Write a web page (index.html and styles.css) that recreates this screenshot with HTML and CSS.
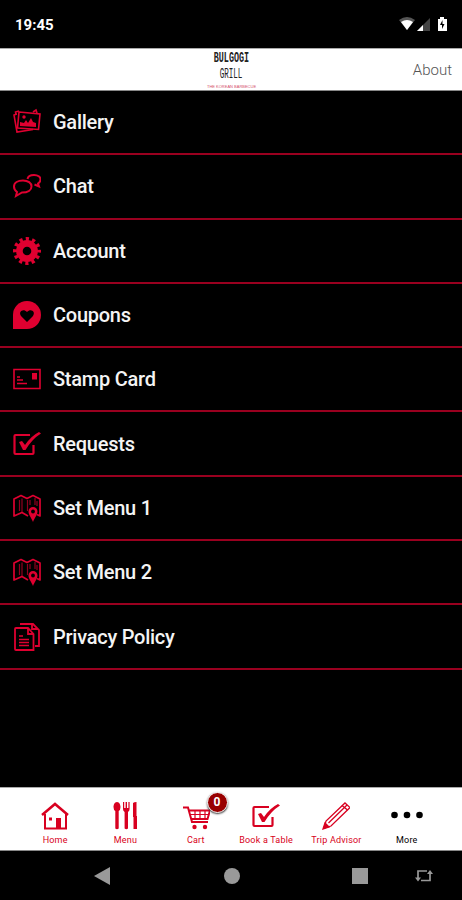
FILE: index.html
```html
<!DOCTYPE html>
<html lang="en">
<head>
    <meta charset="UTF-8">
    <meta name="viewport" content="width=device-width, initial-scale=1.0">
    <title>Bulgogi Grill</title>
    <link rel="stylesheet" href="styles.css">
</head>
<body>
    <svg class="sprite">
        <symbol id="check" viewBox="0 0 28 28">
            <path d="M17 5H2.500Q1.500 5 1.500 6V23Q1.500 24 2.500 24H19.500Q20.500 24 20.500 23V15" fill="none" stroke="currentColor" stroke-width="2.200"/>
            <path d="M6 12L9 11L12 15Q18 6 26 2L28 3.500Q19 9 12.500 20H10Z" fill="currentColor"/>
        </symbol>
        <symbol id="map" viewBox="0 0 28 28">
            <path d="M15 22L9 18.500L1 22V5L8 1.500L14 4.500L20 1.500L27 5V22L24 20.500" fill="none" stroke="currentColor" stroke-width="1.700" stroke-linejoin="round"/>
            <path d="M6.500 6V17M9 4.500V18M14.500 6V17M17 6V11M22 4V11M24 7V12" fill="none" stroke="currentColor" stroke-width="1.200" opacity=".65"/>
            <path d="M20 28C18.500 24 15.500 21 15.500 17.500A4.500 4.500 0 0 1 24.500 17.500C24.500 21 21.500 24 20 28Z" fill="currentColor"/>
            <circle cx="20" cy="17.500" r="1.900" fill="#000"/>
        </symbol>
    </svg>

    <div class="status">
        <span class="time">19:45</span>
        <svg class="signals" width="50" height="18" viewBox="0 0 50 18">
            <path d="M0 4Q8 -2 16 4L8 14Z" fill="#555"/>
            <path d="M2 6Q8 2 14 6L8 14Z" fill="#fff"/>
            <path d="M18 15L31 2V15Z" fill="#444"/>
            <path d="M18 15L24 9V15Z" fill="#fff"/>
            <path d="M39 3H41V1H45V3H48V15H39Z" fill="#fff"/>
            <path d="M43.500 4L41 9H43V13L45.500 8H43.500Z" fill="#000"/>
        </svg>
    </div>

    <div class="header">
        <div class="logo">
            <span class="logo-name">BULGOGI</span>
            <span class="logo-grill">GRILL</span>
            <span class="logo-tagline">THE KOREAN BARBECUE</span>
        </div>
        <span class="about">About</span>
    </div>

    <div class="list">
        <div class="row">
            <svg class="icon" viewBox="0 0 28 28" fill="none" stroke="currentColor" stroke-width="1.600">
                <path d="M4 6L1 7L4 24L20 21.500M6 3L2.500 4L3 7M20 4L23 2L24 5"/>
                <path d="M6 4L27 6L25.500 21.500L4.500 20Z"/>
                <path d="M7 18V14L11 15L13 12L15 15L18 10L20 14L23 15V19Z" fill="currentColor" stroke="none"/>
                <circle cx="11" cy="9" r="1.700" fill="currentColor" stroke="none"/>
            </svg>
            <span>Gallery</span>
        </div>
        <div class="row">
            <svg class="icon" viewBox="0 0 28 28" fill="none" stroke="currentColor" stroke-width="2">
                <path d="M4 20Q1 18 1 14.500C1 10.500 5 8.500 10 8.500S18.500 11 18.500 14.500S15 20.500 9 20.500L3 24Z"/>
                <path d="M14.500 7C15 4 18 3 21 3C25 3 27.500 5 27.500 7.500Q27.500 10 25 11.500L26 14.500L21.500 12.500"/>
            </svg>
            <span>Chat</span>
        </div>
        <div class="row">
            <svg class="icon" viewBox="0 0 28 28" fill="none" stroke="currentColor">
                <circle cx="14" cy="14" r="7.600" stroke-width="6.600"/>
                <circle cx="14" cy="14" r="12" stroke-width="4" stroke-dasharray="3.200 3.083" stroke-dashoffset="1.600"/>
            </svg>
            <span>Account</span>
        </div>
        <div class="row">
            <svg class="icon" viewBox="0 0 28 28">
                <path d="M0 28V14A14 14 0 1 1 14 28Z" fill="currentColor"/>
                <path d="M14 21L8 15C5 11 10 7 14 11C18 7 23 11 20 15Z" fill="#000"/>
            </svg>
            <span>Coupons</span>
        </div>
        <div class="row">
            <svg class="icon" viewBox="0 0 28 28">
                <path d="M1 4.500H27V23.500H1Z" fill="none" stroke="currentColor" stroke-width="1.600"/>
                <path d="M4 12H7M4 15H10M4 18.500H14" stroke="currentColor" stroke-width="1.300"/>
                <path d="M19 8H24V14.500H19Z" fill="currentColor"/>
            </svg>
            <span>Stamp Card</span>
        </div>
        <div class="row">
            <svg class="icon"><use href="#check"/></svg>
            <span>Requests</span>
        </div>
        <div class="row">
            <svg class="icon"><use href="#map"/></svg>
            <span>Set Menu 1</span>
        </div>
        <div class="row">
            <svg class="icon"><use href="#map"/></svg>
            <span>Set Menu 2</span>
        </div>
        <div class="row">
            <svg class="icon" viewBox="0 0 28 28" fill="none" stroke="currentColor" stroke-width="1.800">
                <path d="M7 1H20L26 7V23H22M19 1V6H25"/>
                <path d="M3 5H15L20.500 11V27H3Q2 27 2 26V6Q2 5 3 5ZM15 5V11H20"/>
                <path d="M6 13H10M6 16.500H16M6 19.500H16M6 22.500H16" stroke-width="1.300"/>
            </svg>
            <span>Privacy Policy</span>
        </div>
    </div>

    <div class="tabs">
        <div class="tab">
            <svg class="tab-icon" viewBox="0 0 28 28" fill="none" stroke="currentColor" stroke-width="2">
                <path d="M1 13L14 2L27 13" stroke-width="2.500"/>
                <path d="M4 12V26.500H25V12"/>
                <path d="M15 27V16H20V27Z" fill="currentColor" stroke="none"/>
                <path d="M8 15.500H11V18.500H8Z" fill="currentColor" stroke="none"/>
            </svg>
            <span>Home</span>
        </div>
        <div class="tab">
            <svg class="tab-icon" viewBox="0 0 28 28" fill="currentColor">
                <path d="M6 0C8.500 0 9.500 3 9.500 5Q9.500 8 7.700 9V26.500Q6 28 4.300 26.500V9Q2.500 8 2.500 5C2.500 3 3.500 0 6 0Z"/>
                <path d="M12 0H13.200V6H14.600V0H16V6H17.400V0H18.600V7Q18.600 9 17 10V26.500Q15.300 28 13.600 26.500V10Q12 9 12 7Z"/>
                <path d="M22 1Q23 0 25.500 0V14H26V27H22.500V15H22Z"/>
            </svg>
            <span>Menu</span>
        </div>
        <div class="tab">
            <svg class="tab-icon" viewBox="0 0 28 28" fill="none" stroke="currentColor" stroke-width="2">
                <path d="M1 5.500H6L10 20H26M7 8.500H28L25.500 17H9"/>
                <path d="M8 12.500H27M13 9V17M18 9V17M23 9V17" stroke-width="1.200"/>
                <circle cx="12.500" cy="25" r="2.200" fill="currentColor" stroke="none"/>
                <circle cx="23" cy="25" r="2.200" fill="currentColor" stroke="none"/>
            </svg>
            <span>Cart</span>
            <span class="badge">0</span>
        </div>
        <div class="tab">
            <svg class="tab-icon"><use href="#check"/></svg>
            <span>Book a Table</span>
        </div>
        <div class="tab">
            <svg class="tab-icon" viewBox="0 0 28 28" fill="none" stroke="currentColor" stroke-width="1.300">
                <path d="M2 26L4 19L23 1L28 5.500L9 24Z"/>
                <path d="M6.500 21L25 3M20 3.500L25.500 8"/>
                <path d="M1 27L3 21L7 25Z" fill="currentColor"/>
            </svg>
            <span>Trip Advisor</span>
        </div>
        <div class="tab more">
            <svg class="tab-icon dots" viewBox="0 0 32 28" fill="currentColor">
                <circle cx="3.500" cy="13" r="3.300"/>
                <circle cx="16" cy="13" r="3.300"/>
                <circle cx="28.500" cy="13" r="3.300"/>
            </svg>
            <span>More</span>
        </div>
    </div>

    <div class="navbar">
        <svg width="16" height="18" viewBox="0 0 16 18"><path d="M0 9L16 0V18Z" fill="#999"/></svg>
        <span class="circle"></span>
        <span class="square"></span>
        <svg width="18" height="14" viewBox="0 0 18 14">
            <path d="M6 11.500H15V4M12 2H3V10" fill="none" stroke="#999" stroke-width="1.700"/>
            <path d="M12 5L15 1L18 5ZM0 8.500L3 12.500L6 8.500Z" fill="#999"/>
        </svg>
    </div>
</body>
</html>
```
FILE: styles.css
```css
* {
    box-sizing: border-box;
}
body {
    margin: 0;
    height: 900px;
    display: flex;
    flex-direction: column;
    background-color: #000;
    font-family: Roboto, sans-serif;
    overflow: hidden;
}
.sprite {
    display: none;
}
.status {
    height: 48px;
    padding: 2px 13px 0 15px;
    display: flex;
    align-items: center;
    justify-content: space-between;
    color: #fff;
}
.time {
    font-size: 15px;
    font-weight: bold;
}
.header {
    height: 43px;
    padding-right: 10px;
    display: grid;
    grid-template-columns: 1fr 80px 1fr;
    align-items: center;
    background-color: #fff;
    border-top: 1px solid #aaa;
    border-bottom: 1px solid #888;
}
.logo {
    grid-column: 2;
    height: 41px;
    padding-top: 1px;
    margin-left: 11px;
    display: flex;
    flex-direction: column;
    align-items: center;
    font-family: "Liberation Mono", monospace;
    color: #222;
}
.logo span {
    white-space: nowrap;
}
.logo-name {
    font-size: 14px;
    font-weight: bold;
    line-height: 16px;
    transform: scaleX(0.6);
}
.logo-grill {
    font-size: 14px;
    line-height: 17px;
    transform: scaleX(0.54);
}
.logo-tagline {
    font-family: "Liberation Sans", sans-serif;
    font-size: 4px;
    line-height: 7px;
    color: #d5506c;
}
.about {
    text-align: right;
    font-size: 15px;
    font-weight: 300;
    color: #555;
}
.list {
    flex: 1;
}
.row {
    height: 64.3px;
    padding-left: 13px;
    display: flex;
    align-items: center;
    gap: 12px;
    border-bottom: 2px solid #99001f;
    color: #f4f4f4;
    font-size: 20px;
    font-weight: 500;
    letter-spacing: -0.25px;
}
.icon {
    width: 28px;
    height: 28px;
    color: #df0030;
}
.tabs {
    height: 64px;
    padding: 0 20px;
    display: flex;
    background-color: #fff;
    border-top: 1px solid #aaa;
    border-bottom: 1px solid #888;
}
.tab {
    position: relative;
    flex: 1;
    padding-top: 14px;
    display: flex;
    flex-direction: column;
    align-items: center;
    gap: 5px;
    color: #d80020;
    font-size: 9px;
    line-height: 10px;
    letter-spacing: 0.2px;
    white-space: nowrap;
}
.tab-icon {
    width: 28px;
    height: 28px;
}
.dots {
    width: 32px;
}
.more {
    color: #000;
}
.badge {
    position: absolute;
    top: 4px;
    left: 46px;
    width: 21px;
    height: 21px;
    border: 1.5px solid #fff;
    border-radius: 50%;
    background-color: #980000;
    box-shadow: 0 1px 2px #333;
    color: #fff;
    font-size: 12px;
    font-weight: bold;
    line-height: 18px;
    text-align: center;
}
.navbar {
    height: 49px;
    padding-left: 94px;
    display: grid;
    grid-template-columns: 130px 128px 63px 18px;
    align-items: center;
}
.circle {
    width: 16px;
    height: 16px;
    border-radius: 50%;
    background-color: #999;
}
.square {
    width: 16px;
    height: 16px;
    background-color: #999;
}
```
